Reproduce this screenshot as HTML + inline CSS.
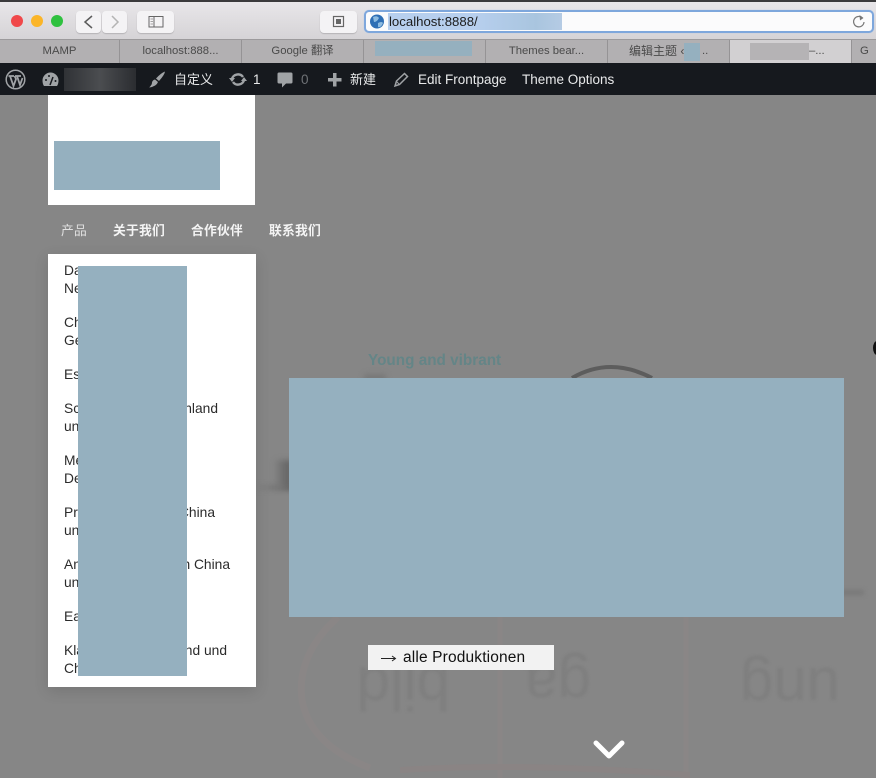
<!DOCTYPE html>
<html><head><meta charset="utf-8">
<style>
html,body{margin:0;padding:0}
body{width:876px;height:778px;position:relative;overflow:hidden;background:#868686;font-family:"Liberation Sans","Noto Sans CJK SC",sans-serif}
div,span{position:absolute;white-space:nowrap}
svg{position:absolute;overflow:visible}
.btn{background:#f4f3f5;border-radius:4px;box-shadow:0 1px 1px #b5b3b6;height:22px;top:11px}
.tab{top:40px;height:23px;line-height:22px;font-size:11.3px;color:#4a4a4a;text-align:center;background:#b2b0b2;border-right:1px solid #959395;box-sizing:border-box}
.ab{top:64px;height:31px;line-height:31px;font-size:13px;color:#e8e9ea}
.nav{top:222px;height:18px;line-height:18px;font-size:12.8px;font-weight:bold;color:#f4f4f4;letter-spacing:.2px}
.m{font-size:13.8px;line-height:18px;height:18px;color:#2b2b2b}
.bl{background:#95b0bf}
.ghost{font-size:60px;font-weight:normal;color:#7f7f7f;transform:scale(-1,-1);line-height:70px;filter:blur(1.200px)}
</style></head><body>

<!-- browser chrome -->
<div style="left:0;top:0;width:876px;height:40px;background:linear-gradient(#e9e7ea,#d5d3d6)"></div>
<div style="left:0;top:0;width:876px;height:2px;background:#3a3a3c"></div>
<div style="left:11px;top:15px;width:12px;height:12px;border-radius:50%;background:#f0484a"></div>
<div style="left:31px;top:15px;width:12px;height:12px;border-radius:50%;background:#fbb528"></div>
<div style="left:51px;top:15px;width:12px;height:12px;border-radius:50%;background:#2fc13f"></div>
<div class="btn" style="left:76px;width:25px"></div>
<div class="btn" style="left:102px;width:25px"></div>
<svg style="left:0;top:0" width="400" height="40" fill="none">
<path d="M92 16 L85 22 L92 28" stroke="#5c5c5c" stroke-width="1.5"/>
<path d="M112 16 L118 22 L112 28" stroke="#b4b4b4" stroke-width="1.5"/>
</svg>
<div class="btn" style="left:137px;width:37px"></div>
<svg style="left:0;top:0" width="400" height="40" fill="none">
<rect x="149" y="16.500" width="14" height="10.500" stroke="#666" stroke-width="1"/>
<path d="M154 16.500 V27" stroke="#666"/>
<path d="M150.500 19 H153 M150.500 21.500 H153 M150.500 24 H153" stroke="#888" stroke-width=".8"/>
</svg>
<div class="btn" style="left:320px;width:37px"></div>
<svg style="left:0;top:0" width="400" height="40" fill="none">
<rect x="333.500" y="16.500" width="10" height="10" stroke="#666" stroke-width="1.200"/>
<rect x="336" y="19" width="5" height="5" fill="#666"/>
</svg>
<div style="left:364px;top:10px;width:506px;height:19px;background:#fbfbfc;border:2px solid #7ea7dc;border-radius:5px;box-shadow:0 0 1px #a9c3e6"></div>
<svg style="left:369px;top:14px" width="16" height="16"><circle cx="8" cy="7.500" r="7" fill="#2f6fb5"/><path d="M4 3 Q8 1 10 4 Q8 8 5 8 Z M9 9 Q13 7 14 9 Q12 14 9 13 Z" fill="#8dbbe0"/></svg>
<div style="left:388px;top:13px;width:174px;height:17px;background:linear-gradient(90deg,#b7cfee,#b7cfee 50%,#a9c5df 85%,#b5cbe4)"></div>
<div style="left:389px;top:13px;height:17px;line-height:17px;font-size:13.200px;color:#1c1c1c">localhost:8888/</div>
<svg style="left:851px;top:14px" width="16" height="16" fill="none"><path d="M11.500 4 A5.200 5.200 0 1 0 13 8" stroke="#777" stroke-width="1.200"/><path d="M8.500 1 L12.500 4 L9 6.500 Z" fill="#777"/></svg>

<!-- tabs -->
<div style="left:0;top:39px;width:876px;height:25px;background:#b0aeb0;border-top:1px solid #9c9a9c;box-sizing:border-box"></div>
<div class="tab" style="left:0;width:120px">MAMP</div>
<div class="tab" style="left:120px;width:122px">localhost:888...</div>
<div class="tab" style="left:242px;width:122px">Google 翻译</div>
<div class="tab" style="left:364px;width:122px"></div>
<div class="bl" style="left:375px;top:41px;width:97px;height:15px"></div>
<div class="tab" style="left:486px;width:122px">Themes bear...</div>
<div class="tab" style="left:608px;width:122px;text-align:left;padding-left:21px;font-size:12px">编辑主题 ‹</div>
<div class="tab" style="left:702px;width:14px;background:none;border:none;text-align:left">..</div>
<div class="bl" style="left:684px;top:43px;width:16px;height:18px"></div>
<div class="tab" style="left:730px;width:122px;background:#d2d0d2;padding-left:79px;text-align:left">–...</div>
<div style="left:750px;top:43px;width:59px;height:17px;background:#b5b3b5"></div>
<div class="tab" style="left:852px;width:24px;text-align:left;padding-left:8px;border:none">G</div>

<!-- admin bar -->
<div style="left:0;top:63px;width:876px;height:32px;background:#16191e"></div>
<svg style="left:5px;top:69px" width="21" height="21" fill="none"><circle cx="10.500" cy="10.500" r="9.300" stroke="#a0a3a6" stroke-width="1.500"/><path d="M3.500 7 H9 M5 7 L8.500 17 L11 10 L9.500 7 M10 7 H16 M12 7 L15 16 L17.500 9" stroke="#a0a3a6" stroke-width="1.800"/></svg>
<svg style="left:42px;top:72px" width="17" height="15"><path d="M8.500 0.500 A8 8 0 0 1 16.500 8.500 Q16.500 12 15 14 H2 Q0.500 12 0.500 8.500 A8 8 0 0 1 8.500 0.500 Z" fill="#a0a3a6"/><path d="M8 13 L11 5" stroke="#16191e" stroke-width="1.500"/><circle cx="4" cy="8" r="1" fill="#16191e"/><circle cx="13.500" cy="9" r="1" fill="#16191e"/><circle cx="7" cy="4" r="1" fill="#16191e"/></svg>
<div style="left:64px;top:68px;width:72px;height:23px;background:linear-gradient(90deg,#303236,#4b4d50 50%,#2b2d31)"></div>
<svg style="left:148px;top:71px" width="18" height="18"><path d="M17 0.500 Q16.500 4 11 10 L8 7.500 Q13 2 17 0.500 Z M7 8.500 L10 11 Q8.500 15.500 1 16.500 Q4 14 4 11.500 Q4.500 9 7 8.500 Z" fill="#a0a3a6"/></svg>
<div class="ab" style="left:174px;font-size:13px;color:#e8e9ea">自定义</div>
<svg style="left:229px;top:72px" width="18" height="15" fill="none"><path d="M3 7 A6 5.500 0 0 1 14 5 M15 8 A6 5.500 0 0 1 4 10" stroke="#a0a3a6" stroke-width="2.400"/><path d="M0 6 H6 L3 10 Z M18 9 H12 L15 5 Z" fill="#a0a3a6"/></svg>
<div class="ab" style="left:253px;color:#e8e9ea;font-size:13.500px">1</div>
<svg style="left:277px;top:72px" width="16" height="16"><path d="M2 0.500 H14 Q15.500 .5 15.500 2 V10 Q15.500 11.500 14 11.500 H9 L5 15.500 V11.500 H2 Q.5 11.500 .5 10 V2 Q.5 .5 2 .5 Z" fill="#a0a3a6"/></svg>
<div class="ab" style="left:301px;color:#6f7276;font-size:13.500px">0</div>
<svg style="left:328px;top:73px" width="14" height="14"><path d="M5 0 H8.500 V5 H13.500 V8.500 H8.500 V13.500 H5 V8.500 H0 V5 H5 Z" fill="#a0a3a6"/></svg>
<div class="ab" style="left:350px">新建</div>
<svg style="left:394px;top:72px" width="15" height="15" fill="none"><path d="M1 14 L2.500 9 L10.500 1.500 L13.500 4.500 L5.500 12.500 Z" stroke="#a0a3a6" stroke-width="1.500"/><path d="M2.500 9.500 L5 12" stroke="#a0a3a6"/></svg>
<div class="ab" style="left:418px;font-size:13.500px">Edit Frontpage</div>
<div class="ab" style="left:522px;font-size:13.500px">Theme Options</div>

<!-- faint background -->
<div style="left:255px;top:484px;width:40px;height:7px;background:linear-gradient(90deg,#868686,#6b6b6b);filter:blur(2px)"></div>
<div style="left:276px;top:460px;width:16px;height:28px;background:linear-gradient(90deg,#7d7d7d,#5f5f5f);filter:blur(3px)"></div>
<div style="left:364px;top:374px;width:22px;height:10px;background:#787878;filter:blur(3px)"></div>
<div style="left:840px;top:590px;width:24px;height:5px;background:#797979;filter:blur(2px)"></div>
<svg style="left:0;top:0" width="876" height="778" fill="none">
<path d="M572 378 Q610 356 652 378" stroke="#5d5d5d" stroke-width="4"/>
<path d="M338 617 Q296 655 302 700 Q310 745 370 768" stroke="#8a8686" stroke-width="7"/>
<path d="M500 617 V778 M686 617 V778" stroke="#8a8686" stroke-width="5"/>
<path d="M400 770 Q520 762 690 775" stroke="#8a8484" stroke-width="6"/>
</svg>
<div class="ghost" style="left:340px;top:653px;width:110px">bild</div>
<div class="ghost" style="left:525px;top:650px;width:66px">ga</div>
<div class="ghost" style="left:730px;top:653px;width:110px">ung</div>
<div style="left:368px;top:352px;height:18px;line-height:18px;font-size:15.300px;font-weight:bold;color:#648587">Young and vibrant</div>
<div style="left:873px;top:341px;width:8px;height:14px;border-radius:50%;background:#111"></div>

<!-- logo -->
<div style="left:48px;top:95px;width:207px;height:110px;background:#fff"></div>
<div class="bl" style="left:54px;top:141px;width:166px;height:49px"></div>

<!-- nav -->
<div class="nav" style="left:61px;font-weight:normal;color:#e0e0e0">产品</div>
<div class="nav" style="left:113px">关于我们</div>
<div class="nav" style="left:191px">合作伙伴</div>
<div class="nav" style="left:269px">联系我们</div>

<!-- dropdown -->
<div style="left:48px;top:254px;width:208px;height:433px;background:#fff;box-shadow:0 4px 14px rgba(0,0,0,.13)"></div>
<div class="m" style="left:64px;top:262px">Da</div>
<div class="m" style="left:64px;top:280px">Ne</div>
<div class="m" style="left:64px;top:314px">Ch</div>
<div class="m" style="left:64px;top:332px">Ge</div>
<div class="m" style="left:64px;top:366px">Es</div>
<div class="m" style="left:64px;top:400px">Sc</div>
<div class="m" style="left:64px;top:418px">un</div>
<div class="m" style="left:64px;top:452px">Me</div>
<div class="m" style="left:64px;top:470px">De</div>
<div class="m" style="left:64px;top:504px">Pr</div>
<div class="m" style="left:64px;top:522px">un</div>
<div class="m" style="left:64px;top:556px">An</div>
<div class="m" style="left:64px;top:574px">un</div>
<div class="m" style="left:64px;top:608px">Ea</div>
<div class="m" style="left:64px;top:642px">Kla</div>
<div class="m" style="left:64px;top:660px">Ch</div>
<div class="m" style="right:658px;top:400px">hland</div>
<div class="m" style="right:661px;top:504px">China</div>
<div class="m" style="right:646px;top:556px">n China</div>
<div class="m" style="right:649px;top:642px">nd und</div>
<div class="bl" style="left:78px;top:266px;width:109px;height:410px"></div>

<!-- main blue -->
<div class="bl" style="left:289px;top:378px;width:555px;height:239px"></div>

<!-- button -->
<div style="left:368px;top:645px;width:186px;height:25px;background:#f2f2f2"></div>
<svg style="left:380px;top:651px" width="17" height="14" fill="none"><path d="M1 7.500 H15 M12 5 L15.500 7.500 L12 10" stroke="#222" stroke-width="1"/></svg>
<div style="left:403px;top:645px;height:25px;line-height:25px;font-size:15.500px;color:#111;letter-spacing:.15px">alle Produktionen</div>

<!-- chevron -->
<svg style="left:0;top:0" width="876" height="778" fill="none"><path d="M596 743 L609 756 L622 743" stroke="#fff" stroke-width="5" stroke-linecap="round" stroke-linejoin="round"/></svg>

</body></html>
